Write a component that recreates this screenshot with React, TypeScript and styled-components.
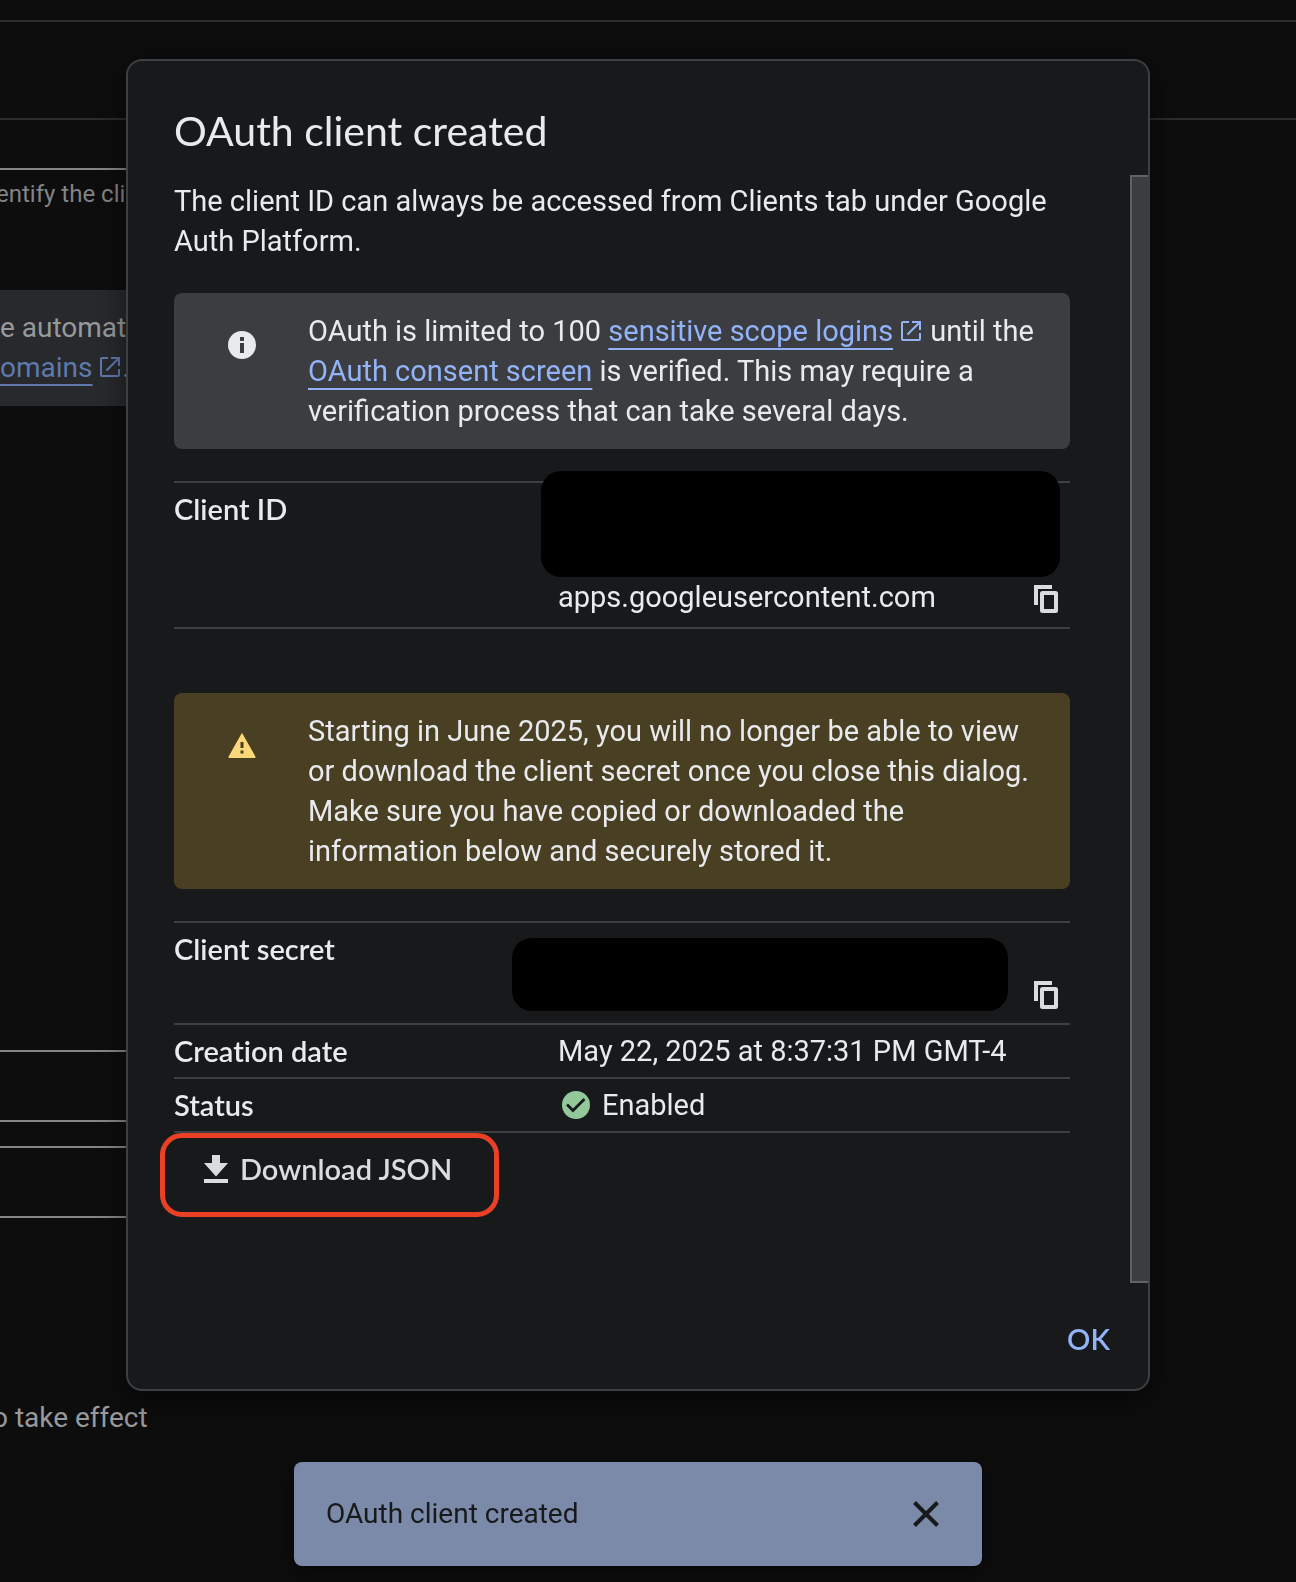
import React from "react";
import styled, { createGlobalStyle } from "styled-components";

const color = {
  page: "#0d0d0e",
  surface: "#18191b",
  border: "#3c4043",
  raised: "#3c3d40",
  text: "#e8eaed",
  action: "#dadce0",
  link: "#93b3f8",
  mutedLink: "#5f78ad",
  mutedText: "#98999b",
};

const GlobalStyle = createGlobalStyle`
  *, *::before, *::after { box-sizing: border-box; }
  html, body { margin: 0; background: ${color.page}; }
  body { font-family: Roboto, "Liberation Sans", sans-serif; color: ${color.text}; }
`;

const heading = `
  font-family: Lato, "Open Sans", sans-serif;
  font-variant-ligatures: none;
`;

const labelText = `
  ${heading}
  font-size: 29px;
  font-weight: 600;
  line-height: 40px;
`;

/* Page behind the dialog */

const Page = styled.main`
  min-height: 100vh;
  overflow: hidden;
  background: ${color.page};
  color: ${color.mutedText};
`;

const Bar = styled.div<{ $height: number }>`
  height: ${(p) => p.$height}px;
  border-bottom: 2px solid #2b2c2e;
`;

const Form = styled.div`
  display: flex;
  flex-direction: column;
  width: 50%;
`;

const NameField = styled.input`
  height: 50px;
  padding: 0;
  border: 0;
  border-bottom: 2px solid #858689;
  background: transparent;
`;

const Hint = styled.p`
  margin: 0 0 78px;
  padding-top: 6px;
  font-size: 24px;
  line-height: 36px;
  text-indent: -4px;
  white-space: nowrap;
  color: #828386;
`;

const Note = styled.div`
  padding: 18px 0;
  margin-bottom: 644px;
  background: #28292c;
  font-size: 28px;
  line-height: 40px;
  white-space: nowrap;
`;

const UriField = styled.input`
  height: 72px;
  margin-bottom: 24px;
  padding: 0;
  border: 2px solid #858689;
  border-left: 0;
  background: transparent;
`;

const Effect = styled.p`
  margin: 156px 0 0;
  font-size: 28px;
  line-height: 40px;
  text-indent: -8px;
`;

/* Dialog */

const Backdrop = styled.div`
  position: fixed;
  inset: 0;
  display: flex;
  justify-content: center;
  align-items: flex-start;
  padding: 59px 20px 0 0;
`;

const Dialog = styled.section`
  width: 1024px;
  max-width: 100%;
  border: 2px solid ${color.border};
  border-radius: 16px;
  background: ${color.surface};
  box-shadow: 0 8px 24px 4px rgba(0, 0, 0, 0.4);
`;

const Title = styled.h1`
  ${heading}
  margin: 0;
  padding: 46px 46px 20px;
  font-size: 41px;
  font-weight: 400;
  line-height: 48px;
`;

const ScrollArea = styled.div`
  display: flex;
`;

const Content = styled.div`
  flex: 1;
  min-width: 0;
  padding: 6px 60px 76px 46px;
  font-size: 29px;
  line-height: 40px;
`;

const ScrollTrack = styled.div`
  width: 18px;
  border: 2px solid #5f6368;
  border-right: 0;
  background: ${color.raised};
`;

const Intro = styled.p`
  margin: 0 0 32px;
`;

const Notice = styled.div<{ $tone: string }>`
  display: flex;
  gap: 48px;
  margin-bottom: 32px;
  padding: 18px 36px 18px 50px;
  border-radius: 8px;
  background: ${(p) => p.$tone};
`;

const NoticeIcon = styled.svg`
  flex: none;
  width: 36px;
  height: 36px;
  margin-top: 16px;
`;

const NoticeText = styled.p`
  margin: 0;
`;

const Link = styled.a<{ $muted?: boolean }>`
  color: ${(p) => (p.$muted ? color.mutedLink : color.link)};
  text-decoration: underline;
  text-decoration-thickness: 2px;
  text-decoration-skip-ink: none;
  text-underline-offset: 7px;
`;

const LaunchSvg = styled.svg<{ $muted?: boolean }>`
  width: 20px;
  height: 20px;
  margin: 0 2px 0 8px;
  color: ${(p) => (p.$muted ? color.mutedLink : color.link)};
`;

const Details = styled.table`
  width: 100%;
  margin-bottom: 64px;
  border-collapse: separate;
  border-spacing: 0;
  border-top: 2px solid ${color.border};
  table-layout: fixed;

  &:last-of-type {
    margin-bottom: 0;
  }
`;

const Label = styled.th`
  ${labelText}
  width: 384px;
  padding: 6px 0;
  border-bottom: 2px solid ${color.border};
  text-align: left;
  vertical-align: top;
`;

const Value = styled.td`
  padding: 6px 0;
  border-bottom: 2px solid ${color.border};
  vertical-align: top;
`;

const IdValue = styled.div`
  position: relative;
  display: flex;
  align-items: flex-end;
  justify-content: space-between;
  height: 132px;
  padding: 0 12px 4px 0;
`;

const SecretValue = styled(IdValue)`
  justify-content: flex-end;
  height: 88px;
`;

const Redaction = styled.span<{ $left: number; $top: number; $right: number; $height: number }>`
  position: absolute;
  left: ${(p) => p.$left}px;
  top: ${(p) => p.$top}px;
  right: ${(p) => p.$right}px;
  height: ${(p) => p.$height}px;
  border-radius: 20px;
  background: #000;
`;

const Status = styled.div`
  display: flex;
  align-items: center;
  gap: 12px;
  padding-left: 4px;
`;

const PlainButton = styled.button`
  display: flex;
  align-items: center;
  padding: 0;
  border: 0;
  background: none;
  color: ${color.action};
  cursor: pointer;
`;

const CopyButton = styled(PlainButton)`
  height: 28px;
  margin-bottom: 4px;
`;

const DownloadArea = styled.div`
  position: relative;
  padding: 16px 30px 18px;
`;

const DownloadButton = styled(PlainButton)`
  ${labelText}
  gap: 12px;
`;

const Highlight = styled.span`
  position: absolute;
  left: -14px;
  top: 0;
  width: 339px;
  height: 84px;
  border: 5px solid #ea4025;
  border-radius: 22px;
  pointer-events: none;
`;

const Actions = styled.footer`
  display: flex;
  justify-content: flex-end;
  padding: 36px 38px 30px;
`;

const OkButton = styled(PlainButton)`
  ${labelText}
  color: ${color.link};
`;

/* Snackbar */

const SnackbarHolder = styled.div`
  position: fixed;
  inset: auto 0 16px;
  display: flex;
  justify-content: center;
  padding-right: 20px;
`;

const Snackbar = styled.div`
  display: flex;
  align-items: center;
  justify-content: space-between;
  width: 688px;
  max-width: 100%;
  padding: 32px 43px 32px 32px;
  border-radius: 8px;
  background: #7b8aa9;
  box-shadow: 0 6px 20px rgba(0, 0, 0, 0.5);
  color: #18191b;
  font-size: 28px;
  line-height: 40px;
`;

const CloseButton = styled(PlainButton)`
  color: #18191b;
`;

const LaunchIcon = ({ muted }: { muted?: boolean }) => (
  <LaunchSvg $muted={muted} viewBox="0 0 20 20" fill="none" stroke="currentColor" strokeWidth="2" aria-hidden="true">
    <path d="M8 1H2a1 1 0 0 0-1 1v16a1 1 0 0 0 1 1h16a1 1 0 0 0 1-1v-6" />
    <path d="M11 1h8v8M19 1 6.500 13.500" />
  </LaunchSvg>
);

const CopyIcon = () => (
  <svg width="24" height="28" viewBox="0 0 24 28" fill="none" stroke="currentColor" strokeWidth="4" aria-hidden="true">
    <path d="M18 2H2V20" />
    <rect x="8" y="8" width="14" height="18" rx="0.500" />
  </svg>
);

const App = () => (
  <>
    <GlobalStyle />
    <Page>
      <Bar $height={22} />
      <Bar $height={98} />
      <Form>
        <NameField aria-label="Name" />
        <Hint>entify the cli</Hint>
        <Note>
          e automat
          <br />
          <Link $muted href="#domains">omains</Link>
          <LaunchIcon muted />.
        </Note>
        <UriField aria-label="URI 1" />
        <UriField aria-label="URI 2" />
        <Effect>o take effect</Effect>
      </Form>
    </Page>

    <Backdrop>
      <Dialog role="dialog" aria-modal="true" aria-labelledby="dialog-title">
        <Title id="dialog-title">OAuth client created</Title>
        <ScrollArea>
          <Content>
            <Intro>The client ID can always be accessed from Clients tab under Google Auth Platform.</Intro>
            <Notice $tone={color.raised}>
              <NoticeIcon viewBox="0 0 36 36" aria-hidden="true">
                <circle cx="18" cy="18" r="14" fill="#e8eaed" />
                <path d="M16 10h4v4h-4zM16 16h4v10h-4z" fill={color.raised} />
              </NoticeIcon>
              <NoticeText>
                OAuth is limited to 100 <Link href="#scopes">sensitive scope logins</Link>
                <LaunchIcon /> until the <Link href="#consent">OAuth consent screen</Link> is verified. This may
                require a verification process that can take several days.
              </NoticeText>
            </Notice>
            <Details>
              <tbody>
                <tr>
                  <Label scope="row">Client ID</Label>
                  <Value>
                    <IdValue>
                      apps.googleusercontent.com
                      <CopyButton aria-label="Copy client ID"><CopyIcon /></CopyButton>
                      <Redaction $left={-17} $top={-18} $right={10} $height={106} />
                    </IdValue>
                  </Value>
                </tr>
              </tbody>
            </Details>
            <Notice $tone="#493f22">
              <NoticeIcon viewBox="0 0 36 36" aria-hidden="true">
                <path d="M18 5.700 31.400 29.500Q32 31 30.500 31H5.500Q4 31 4.600 29.500Z" fill="#fdd878" />
                <path d="M16.500 15h3v6h-3zM16.500 23.500h3v3h-3z" fill="#493f22" />
              </NoticeIcon>
              <NoticeText>
                Starting in June 2025, you will no longer be able to view or download the client secret once you close
                this dialog. Make sure you have copied or downloaded the information below and securely stored it.
              </NoticeText>
            </Notice>
            <Details>
              <tbody>
                <tr>
                  <Label scope="row">Client secret</Label>
                  <Value>
                    <SecretValue>
                      <Redaction $left={-46} $top={9} $right={62} $height={73} />
                      <CopyButton aria-label="Copy client secret"><CopyIcon /></CopyButton>
                    </SecretValue>
                  </Value>
                </tr>
                <tr>
                  <Label scope="row">Creation date</Label>
                  <Value>May 22, 2025 at 8:37:31 PM GMT-4</Value>
                </tr>
                <tr>
                  <Label scope="row">Status</Label>
                  <Value>
                    <Status>
                      <svg width="28" height="28" viewBox="0 0 28 28" aria-hidden="true">
                        <circle cx="14" cy="14" r="14" fill="#93c99a" />
                        <path d="m5 13.500 6 6L22.500 8" fill="none" stroke="#18191b" strokeWidth="2.800" />
                      </svg>
                      Enabled
                    </Status>
                  </Value>
                </tr>
              </tbody>
            </Details>
            <DownloadArea>
              <DownloadButton>
                <svg width="24" height="28" viewBox="0 0 24 28" fill="currentColor" aria-hidden="true">
                  <path d="M8 0h8v8h8L12 21.500 0 8h8zM0 24h24v4H0z" />
                </svg>
                Download JSON
              </DownloadButton>
              <Highlight />
            </DownloadArea>
          </Content>
          <ScrollTrack />
        </ScrollArea>
        <Actions>
          <OkButton>OK</OkButton>
        </Actions>
      </Dialog>
    </Backdrop>

    <SnackbarHolder>
      <Snackbar role="status">
        OAuth client created
        <CloseButton aria-label="Close">
          <svg width="26" height="26" viewBox="0 0 26 26" fill="none" stroke="currentColor" strokeWidth="4" aria-hidden="true">
            <path d="m1.500 1.500 23 23m0-23-23 23" />
          </svg>
        </CloseButton>
      </Snackbar>
    </SnackbarHolder>
  </>
);

export default App;
